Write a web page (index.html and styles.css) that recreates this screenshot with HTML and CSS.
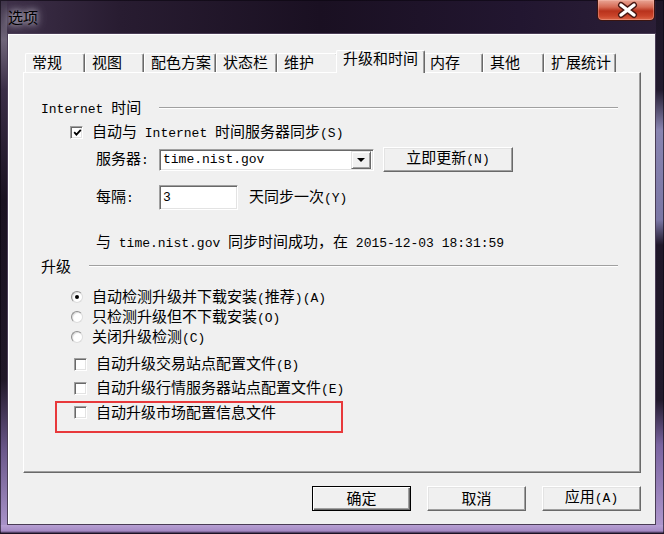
FILE: index.html
```html
<!DOCTYPE html>
<html lang="zh-CN">
<head>
    <meta charset="UTF-8">
    <meta name="viewport" content="width=device-width, initial-scale=1.0">
    <title>选项</title>
    <link rel="stylesheet" href="styles.css">
</head>
<body>

<div class="window">
    <div class="titlebar">
        <span class="title">选项</span>
        <div class="close">
            <svg width="58" height="21" viewBox="0 0 58 21">
                <path d="M24 6 L37 16 M37 6 L24 16" stroke="#4a1812" stroke-width="6" stroke-linecap="round"/>
                <path d="M24 6 L37 16 M37 6 L24 16" stroke="#ffffff" stroke-width="3.4" stroke-linecap="round"/>
            </svg>
        </div>
    </div>

    <div class="client">
        <!-- tab strip -->
        <div class="tabs">
            <div class="tab w60">常规</div>
            <div class="tab w59">视图</div>
            <div class="tab w72">配色方案</div>
            <div class="tab w61">状态栏</div>
            <div class="tab w61">维护</div>
            <div class="tab selected">升级和时间</div>
            <div class="tab w60">内存</div>
            <div class="tab w61">其他</div>
            <div class="tab w72">扩展统计</div>
        </div>

        <div class="page">
            <div class="group-head">
                <span><span class="m">Internet </span>时间</span>
                <div class="rule"></div>
            </div>

            <div class="row sync-row">
                <span class="checkbox">
                    <svg width="9" height="9" viewBox="0 0 9 9"><polyline points="1.2,4.2 3.4,6.6 7.8,1.8" fill="none" stroke="#000" stroke-width="1.8"/></svg>
                </span>
                <span>自动与<span class="m"> Internet </span>时间服务器同步<span class="m">(S)</span></span>
            </div>

            <div class="row field-row server-row">
                <span class="field-label">服务器<span class="m">:</span></span>
                <div class="combo">
                    <span class="m">time.nist.gov</span>
                    <span class="combo-btn"><span class="arrow"></span></span>
                </div>
                <button class="btn update-btn">立即更新<span class="m">(N)</span></button>
            </div>

            <div class="row field-row interval-row">
                <span class="field-label">每隔<span class="m">:</span></span>
                <div class="textbox"><span class="m">3</span></div>
                <span class="after">天同步一次<span class="m">(Y)</span></span>
            </div>

            <div class="row status-row">
                <span>与<span class="m"> time.nist.gov </span>同步时间成功，在<span class="m"> 2015-12-03 18:31:59</span></span>
            </div>

            <div class="group-head upgrade-head">
                <span>升级</span>
                <div class="rule"></div>
            </div>

            <div class="radios">
                <div class="row radio-row"><span class="radio on"></span><span>自动检测升级并下载安装<span class="m">(</span>推荐<span class="m">)(A)</span></span></div>
                <div class="row radio-row"><span class="radio"></span><span>只检测升级但不下载安装<span class="m">(O)</span></span></div>
                <div class="row radio-row"><span class="radio"></span><span>关闭升级检测<span class="m">(C)</span></span></div>
            </div>

            <div class="checks">
                <div class="row check-row"><span class="checkbox"></span><span>自动升级交易站点配置文件<span class="m">(B)</span></span></div>
                <div class="row check-row"><span class="checkbox"></span><span>自动升级行情服务器站点配置文件<span class="m">(E)</span></span></div>
            </div>

            <div class="highlight">
                <div class="row check-row"><span class="checkbox"></span><span>自动升级市场配置信息文件</span></div>
            </div>
        </div>

        <div class="buttons">
            <button class="btn dlg-btn default">确定</button>
            <button class="btn dlg-btn">取消</button>
            <button class="btn dlg-btn">应用<span class="m">(A)</span></button>
        </div>
    </div>
</div>

</body>
</html>
```

FILE: styles.css
```css
body {
    margin: 0;
    padding: 0;
    font-family: "Noto Sans CJK SC", sans-serif;
    font-size: 15px;
    color: #000;
}

.m {
    font-family: "Liberation Mono", monospace;
    font-size: 13px;
    white-space: pre;
}

/* window frame */
.window {
    width: 664px;
    height: 534px;
    box-sizing: border-box;
    padding: 0 8px 9px 7px;
    display: flex;
    flex-direction: column;
    background:
        linear-gradient(to bottom, #b7a0d3, #a58ac4 6px, #3a2a48 8px) 0 525px / 100% 9px no-repeat,
        linear-gradient(to bottom, #3d3248 0, #6f6579 40px, #3a2e46 90px, #1a1221 200px, #201828 380px, #6a578a 450px, #a892c8 525px) 0 0 / 7px 100% no-repeat,
        linear-gradient(to bottom, #1d1526 0, #221a2e 90px, #8985b1 130px, #7b77a5 220px, #1f1729 245px, #221a2c 400px, #7a64a0 445px, #ae96cc 525px) 100% 0 / 8px 100% no-repeat,
        linear-gradient(to right, #3e3049, #281c31 120px, #1a1022 320px, #221630 520px, #2b1f37);
    box-shadow: inset 0 0 0 1px rgba(10, 5, 15, 0.6);
}

.titlebar {
    height: 33px;
    display: flex;
    align-items: flex-start;
    flex: none;
}

.title {
    margin-top: 7px;
    margin-left: 1px;
    line-height: 20px;
    color: #000;
    text-shadow: 0 0 6px rgba(235, 235, 245, 0.95), 0 0 12px rgba(200, 195, 210, 0.8);
}

.close {
    margin-left: auto;
    margin-right: 1px;
    width: 58px;
    height: 21px;
    box-sizing: border-box;
    border: 1px solid #3a1410;
    border-top: none;
    border-radius: 0 0 5px 5px;
    background: linear-gradient(to bottom, #e9a595 0, #d66b55 7px, #b8321c 11px, #c9442a 16px, #e07050 21px);
    box-shadow: inset 0 0 0 1px rgba(255, 200, 190, 0.35);
}

.close svg {
    display: block;
    margin: -1px 0 0 -1px;
}

/* client area */
.client {
    flex: 1;
    background-color: #f0f0f0;
    border: 1px solid #4a3d56;
    box-shadow: inset 1px 1px #ffffff;
    padding: 16px 14px 0 15px;
    display: flex;
    flex-direction: column;
}

.tabs {
    display: flex;
    align-items: flex-end;
    height: 23px;
    margin-left: 2px;
    margin-bottom: -1px;
    flex: none;
}

.tab {
    box-sizing: border-box;
    height: 19px;
    margin-bottom: 1px;
    padding-left: 6px;
    line-height: 16px;
    border-top: 1px solid #ffffff;
    border-left: 1px solid #ffffff;
    border-right: 1px solid #696969;
    border-radius: 2px 2px 0 0;
    box-shadow: inset -1px 0 #a0a0a0;
    background-color: #f0f0f0;
    white-space: nowrap;
}

.w59 { width: 59px; }
.w60 { width: 60px; }
.w61 { width: 61px; }
.w72 { width: 72px; }

.tab.selected {
    position: relative;
    z-index: 1;
    width: 89px;
    height: 23px;
    margin: 0 -2px;
    line-height: 14px;
}

.page {
    height: 401px;
    box-sizing: border-box;
    flex: none;
    border-top: 1px solid #ffffff;
    border-left: 1px solid #ffffff;
    border-right: 1px solid #696969;
    border-bottom: 1px solid #696969;
    box-shadow: inset -1px -1px #a0a0a0;
    padding: 25px 22px 0 17px;
}

.row {
    display: flex;
    align-items: center;
    height: 20px;
    line-height: 16px;
    white-space: nowrap;
}

.group-head {
    display: flex;
    align-items: center;
    height: 20px;
    line-height: 16px;
}

.rule {
    flex: 1;
    margin-left: 18px;
    border-top: 1px solid #a0a0a0;
    border-bottom: 1px solid #ffffff;
}

.sync-row {
    margin-top: 4px;
    margin-left: 29px;
}

.checkbox {
    box-sizing: border-box;
    width: 13px;
    height: 13px;
    margin-right: 9px;
    flex: none;
    background-color: #fff;
    border: 1px solid;
    border-color: #a0a0a0 #ffffff #ffffff #a0a0a0;
    box-shadow: inset 1px 1px #696969, inset -1px -1px #e3e3e3;
    display: flex;
    align-items: center;
    justify-content: center;
}

.checkbox svg {
    display: block;
    margin: 1px 0 0 1px;
}

.field-row {
    height: 25px;
    margin-left: 55px;
}

.server-row {
    margin-top: 5px;
}

.interval-row {
    margin-top: 13px;
}

.field-label {
    width: 63px;
    flex: none;
}

.combo,
.textbox {
    box-sizing: border-box;
    background-color: #fff;
    border: 1px solid;
    border-color: #a0a0a0 #ffffff #ffffff #a0a0a0;
    box-shadow: inset 1px 1px #696969, inset -1px -1px #e3e3e3;
    display: flex;
    align-items: center;
    padding-left: 3px;
}

.combo {
    width: 215px;
    height: 22px;
    padding-right: 2px;
}

.combo-btn {
    margin-left: auto;
    width: 20px;
    height: 18px;
    box-sizing: border-box;
    background-color: #f0f0f0;
    border: 1px solid;
    border-color: #e3e3e3 #696969 #696969 #e3e3e3;
    box-shadow: inset 1px 1px #ffffff, inset -1px -1px #a0a0a0;
    display: flex;
    align-items: center;
    justify-content: center;
}

.arrow {
    width: 0;
    height: 0;
    border-left: 4px solid transparent;
    border-right: 4px solid transparent;
    border-top: 4px solid #000;
    margin-top: 1px;
}

.textbox {
    width: 79px;
    height: 25px;
}

.after {
    margin-left: 11px;
}

.btn {
    box-sizing: border-box;
    height: 25px;
    padding: 0 0 2px;
    font-family: "Noto Sans CJK SC", sans-serif;
    font-size: 15px;
    color: #000;
    background-color: #f0f0f0;
    border: 1px solid;
    border-color: #ffffff #696969 #696969 #ffffff;
    box-shadow: inset -1px -1px #a0a0a0, inset 1px 1px #e3e3e3;
    line-height: 16px;
}

.update-btn {
    width: 130px;
    margin-left: 9px;
}

.status-row {
    margin-top: 22px;
    margin-left: 55px;
}

.upgrade-head {
    margin-top: 4px;
}

.radios {
    margin-top: 11px;
    margin-left: 30px;
}

.radio {
    box-sizing: border-box;
    width: 12px;
    height: 12px;
    margin-right: 9px;
    flex: none;
    border-radius: 50%;
    background-color: #fff;
    border: 1px solid;
    border-color: #8e8e8e #dcdcdc #dcdcdc #8e8e8e;
    box-shadow: inset 1px 1px 1px rgba(0, 0, 0, 0.15);
    display: flex;
    align-items: center;
    justify-content: center;
}

.radio.on::after {
    content: "";
    width: 4px;
    height: 4px;
    border-radius: 50%;
    background-color: #000;
}

.checks {
    margin-top: 5px;
    margin-left: 33px;
}

.check-row {
    height: 24px;
}

.highlight {
    box-sizing: border-box;
    width: 288px;
    height: 32px;
    margin-top: 1px;
    margin-left: 14px;
    border: 2px solid #e8393b;
    padding-left: 17px;
}

.highlight .check-row {
    height: 18px;
}

.buttons {
    display: flex;
    justify-content: flex-end;
    gap: 16px;
    margin-top: 13px;
}

.dlg-btn {
    width: 99px;
}

.dlg-btn.default {
    border: 1px solid #000;
    box-shadow: inset 1px 1px #ffffff, inset -1px -1px #696969, inset -2px -2px #a0a0a0;
}
```
